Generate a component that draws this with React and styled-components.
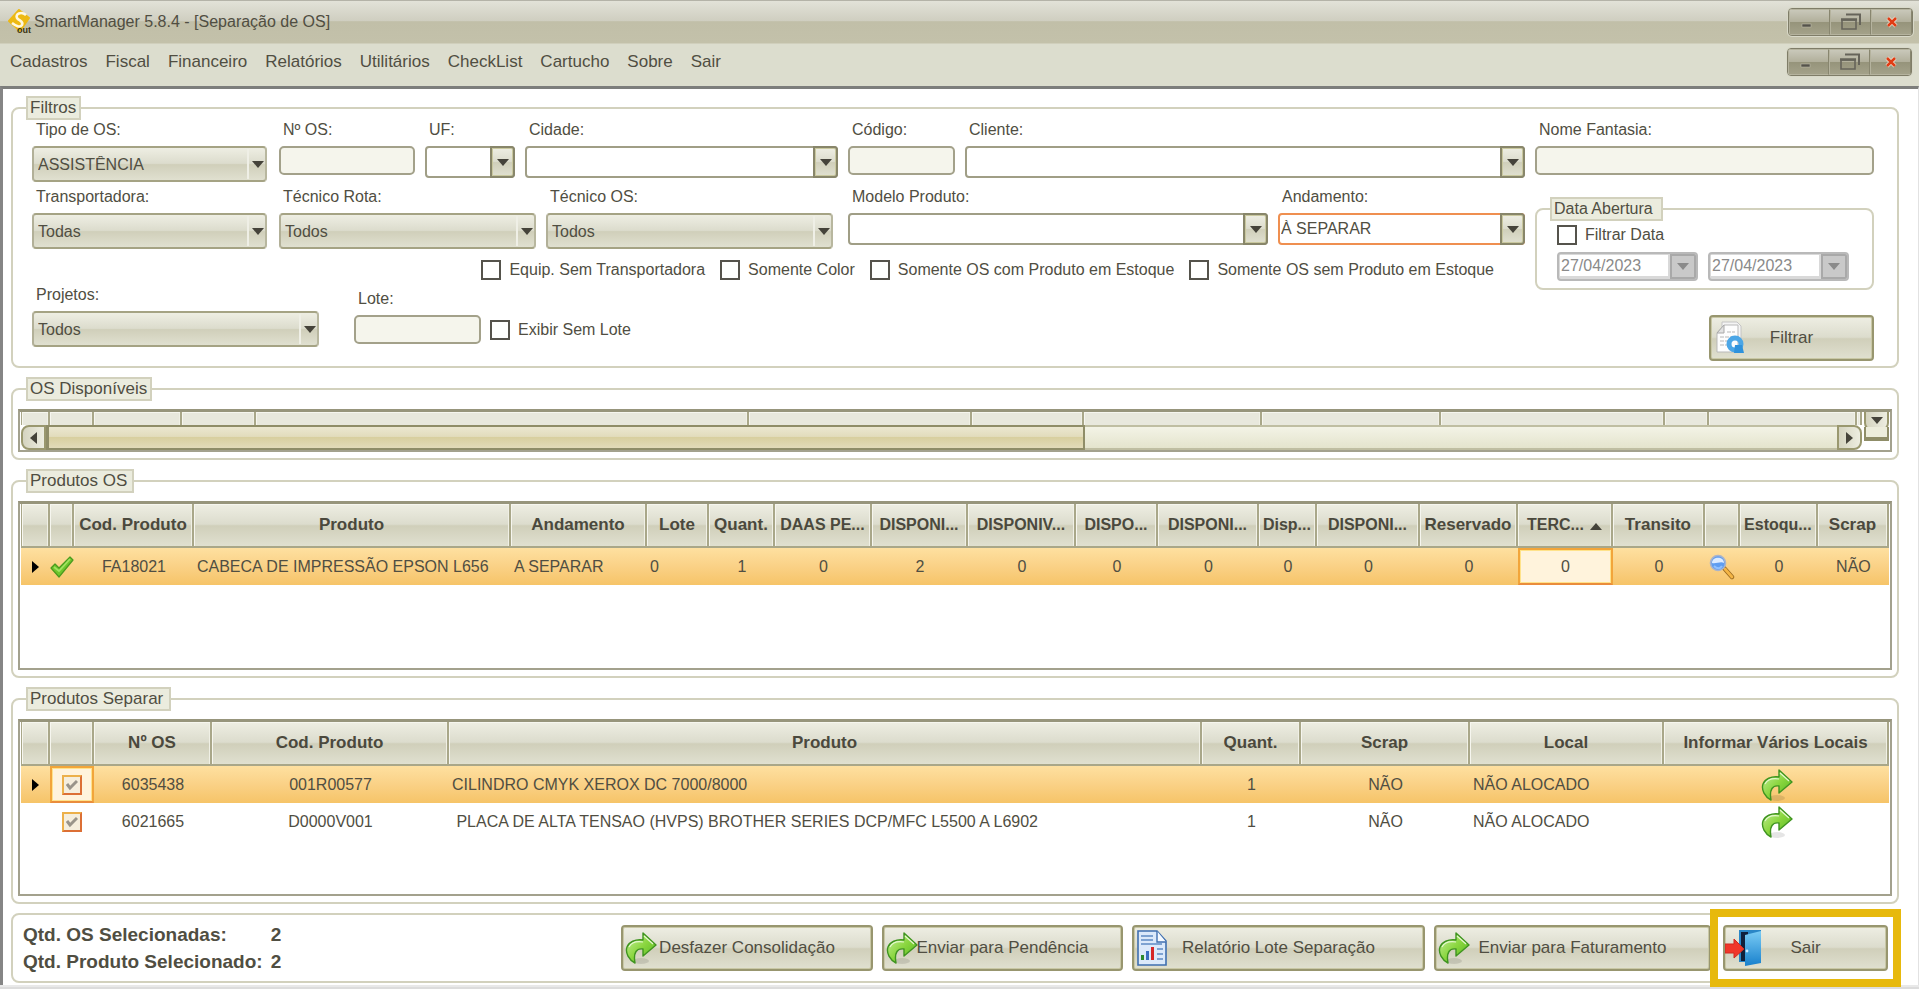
import React, { useState } from 'react';
import styled, { createGlobalStyle, css } from 'styled-components';

const GlobalStyle = createGlobalStyle`
  * { box-sizing: border-box; }
  body {
    margin: 0;
    background: #fff;
    color: #504e42;
    font-family: "Liberation Sans", Arial, sans-serif;
    font-size: 16px;
  }
  button, input, select {
    font-family: inherit;
    font-size: inherit;
    color: inherit;
    margin: 0;
  }
`;

const metal = 'linear-gradient(#eeeee3, #dcdccd 48%, #d0cfba 52%, #e0e0d0)';

const Page = styled.div`
  min-height: 100vh;
  display: flex;
  flex-direction: column;
  overflow: hidden;
`;

/* ---------- barras do topo ---------- */

const TitleBar = styled.header`
  height: 44px;
  padding: 0 6px 0 8px;
  display: flex;
  align-items: center;
  gap: 2px;
  border-top: 1px solid #b4b3a8;
  border-bottom: 1px solid #d0cfbc;
  background: linear-gradient(#e2e2d8, #cfcec0 48%, #c1bfa8 49%, #c3c1aa);
`;

const Title = styled.h1`
  margin: 0;
  flex: 1;
  font-size: 16px;
  font-weight: normal;
`;

const MenuBar = styled.nav`
  height: 42px;
  padding: 0 7px 6px 10px;
  display: flex;
  align-items: center;
  gap: 18px;
  background: #dcddce;
`;

const MenuItem = styled.a`
  font-size: 17px;
  color: inherit;
  text-decoration: none;
`;

const WindowButtons = styled.div`
  margin-left: auto;
  display: flex;
  border: 1px solid #7f7d68;
  border-radius: 4px;
  overflow: hidden;
  box-shadow: 0 0 0 1px #d9d9c9;
`;

const WindowButton = styled.button`
  width: 41px;
  height: 26px;
  padding: 0;
  display: flex;
  align-items: center;
  justify-content: center;
  border: 1px solid #b5b39e;
  border-right-color: #88866f;
  background: linear-gradient(#c9c8ba, #b2b09c 48%, #96947b 52%, #a3a189);
`;

const Content = styled.main`
  flex: 1;
  display: flex;
  flex-direction: column;
  gap: 9px;
  padding: 7px 19px 2px 8px;
  border-top: 3px solid #7d7e7c;
  border-left: 3px solid #858585;
  border-right: 1px solid #e2e2e2;
`;

const StatusLine = styled.footer`
  height: 6px;
  border-top: 2px solid #e9e9e9;
  background: #dcdcdc;
`;

/* ---------- caixas ---------- */

const Group = styled.fieldset`
  margin: 0;
  padding: 0;
  min-width: 0;
  border: 2px solid #d2d1bd;
  border-radius: 8px;
`;

const GroupTitle = styled.legend`
  height: 24px;
  margin-left: 13px;
  padding: 0 ${(p) => p.$end || 3}px 0 2px;
  font-size: ${(p) => (p.$small ? 16 : 17)}px;
  line-height: 20px;
  border: 2px solid #d2d1bd;
  background: #ebecde;
`;

const FilterBody = styled.div`
  display: grid;
  grid-template-columns: 1493fr 339fr;
  column-gap: 10px;
  padding: 0 23px 5px 19px;
`;

const FilterColumn = styled.div`
  display: flex;
  flex-direction: column;
  gap: 5px;
  min-width: 0;
`;

const FilterRow = styled.div`
  display: grid;
  grid-template-columns: ${(p) => p.$cols};
  gap: 10px;
  align-items: start;
`;

const LooseRow = styled.div`
  display: flex;
  align-items: center;
`;

const CheckRow = styled.div`
  margin-top: 6px;
  padding-right: 31px;
  display: flex;
  justify-content: flex-end;
  gap: 15px;
`;

const FieldBox = styled.div`
  display: flex;
  flex-direction: column;
  gap: 6px;
  min-width: 0;
  padding-right: ${(p) => p.$end || 0}px;
  label {
    padding-left: 4px;
    line-height: 20px;
  }
`;

const ProjectField = styled(FieldBox)`
  width: 287px;
`;

const LotField = styled(FieldBox)`
  width: 127px;
  margin: 0 9px 0 35px;
`;

const LotCheck = styled.div`
  padding-top: 28px;
`;

const TextInput = styled.input`
  width: 100%;
  height: 29px;
  border: 2px solid #a3a18a;
  border-radius: 5px;
  background: #f5f5ec;
  padding: 0 4px;
`;

/* o select e a seta ocupam a mesma celula */
const Combo = styled.div`
  display: grid;
  > * { grid-area: 1 / 1; }
  select {
    appearance: none;
    width: 100%;
    height: 36px;
    padding: 0 26px 0 4px;
    border: 2px solid #a5a384;
    border-left-color: #b2b098;
    border-right-color: #b8b79f;
    border-radius: 4px;
    background: ${metal};
  }
  ${(p) => p.$edit && css`
    select {
      height: 32px;
      padding-left: 1px;
      padding-bottom: 2px;
      border-color: ${p.$focus ? '#ef8f50' : '#a09e86'};
      background: #fff;
    }
  `}
`;

const ComboArrow = styled.span`
  justify-self: end;
  pointer-events: none;
  display: flex;
  align-items: center;
  justify-content: center;
  width: 20px;
  margin: 3px 0;
  border-left: 2px solid #efefe6;
  ${(p) => p.$edit && css`
    width: 25px;
    margin: 0;
    border: 2px solid #88866a;
    border-radius: 0 4px 4px 0;
    box-shadow: inset 0 0 0 1px #c9c89f;
    background: ${metal};
  `}
`;

const CheckLabel = styled.label`
  display: flex;
  align-items: center;
  gap: 8px;
  line-height: 20px;
  white-space: nowrap;
  input {
    appearance: none;
    width: 20px;
    height: 20px;
    border: 2px solid #55534c;
    background: #fff;
  }
  input:checked {
    background: linear-gradient(135deg, transparent 30%, #55534c 30%, #55534c 70%, transparent 70%);
  }
`;

const DateGroup = styled(Group)`
  margin-top: 17px;
`;

const DateBody = styled.div`
  padding: 4px 20px 7px;
  display: flex;
  flex-direction: column;
  gap: 7px;
`;

const DateRow = styled.div`
  display: flex;
  gap: 10px;
`;

const DateBox = styled.div`
  flex: 0 1 141px;
  height: 29px;
  display: flex;
  border: 2px solid #b9b9b9;
  border-radius: 4px;
  background: #d9d9d9;
  overflow: hidden;
  input {
    flex: 1;
    min-width: 0;
    margin: 1px 2px 3px 1px;
    padding: 0 1px;
    border: 0;
    background: #fff;
    color: #8a8a8a;
  }
  button {
    width: 26px;
    padding: 0;
    display: flex;
    align-items: center;
    justify-content: center;
    border: 2px solid #a9a9a9;
    background: #c9c9c9;
  }
`;

const ActionButton = styled.button`
  position: relative;
  flex: 0 1 ${(p) => p.$width}px;
  height: 46px;
  padding: 0 2px;
  display: grid;
  align-items: center;
  border: 2px solid #98966f;
  border-radius: 4px;
  box-shadow: inset 0 0 0 1px #c9c8a6;
  background: ${metal};
  font-size: 17px;
  white-space: nowrap;
  > * { grid-area: 1 / 1; }
  span { text-align: center; }
`;

const FilterAction = styled.div`
  display: flex;
  justify-content: flex-end;
  margin-top: 20px;
`;

const ExitButton = styled(ActionButton)`
  margin-left: 3px;
  padding: 0;
  &::after {
    content: '';
    position: absolute;
    inset: -18px -15px;
    border: 8px solid #e7b90c;
  }
`;

/* ---------- grades ---------- */

const GridBox = styled.div`
  margin: 8px 5px 6px;
  min-height: ${(p) => p.$min}px;
  display: flex;
  border: 2px solid #a3a18d;
  border-top: 3px solid #97957c;
  padding: 0 1px;
`;

const GridMain = styled.div`
  flex: 1;
  min-width: 0;
`;

const Table = styled.table`
  width: 100%;
  table-layout: fixed;
  border-collapse: separate;
  border-spacing: 0;
`;

const Col = styled.col`
  width: ${(p) => p.$size}%;
`;

const Th = styled.th`
  height: ${(p) => (p.$short ? 13 : 44)}px;
  padding: 0;
  border-right: 2px solid #a9a789;
  border-bottom: ${(p) => (p.$short ? 0 : 2)}px solid #a9a789;
  box-shadow: inset 1px 1px 0 #f6f6ef, inset -1px 0 0 #f0f0e6;
  background: ${(p) => (p.$short ? '#e8e8dd' : metal)};
  font-size: ${(p) => (p.$cut ? 16 : 17)}px;
  color: #4b493d;
  white-space: nowrap;
  overflow: hidden;
  &:first-child { border-left: 1px solid #a9a789; }
  svg { margin-left: 6px; }
`;

const Td = styled.td`
  height: 37px;
  padding: 0 ${(p) => (p.$icon ? 0 : 3)}px;
  text-align: ${(p) => (p.$left ? 'left' : 'center')};
  white-space: pre;
  overflow: hidden;
  svg { display: block; margin: 0 auto; }
  ${(p) => p.$focus && css`
    padding: 0;
    border: 2px solid #f2a53a;
    border-bottom-color: #ea8c3c;
    box-shadow: inset 0 0 0 1px #ffe28a;
    background: #fff3dc;
  `}
`;

const Tr = styled.tr`
  ${(p) => p.$active && css`
    background: linear-gradient(#fee0a0, #fad186 50%, #f6c468);
  `}
`;

const RowCheck = styled.input`
  appearance: none;
  width: 20px;
  height: 20px;
  display: block;
  border: 2px solid #ecb04a;
  border-right-color: #dc6f35;
  border-bottom-color: #dc6f35;
  background: #f5eedd;
`;

const CheckCell = styled.label`
  display: grid;
  place-items: center;
  > * { grid-area: 1 / 1; }
  svg { pointer-events: none; }
`;

const IconButton = styled.button`
  display: block;
  margin: 0 auto;
  padding: 0;
  border: 0;
  background: none;
`;

/* ---------- barra de rolagem ---------- */

const ScrollBar = styled.div`
  display: flex;
  height: 25px;
`;

const ScrollButton = styled.button`
  width: 25px;
  padding: 0;
  display: flex;
  align-items: center;
  justify-content: center;
  border: 2px solid #9a986f;
  border-radius: ${(p) => p.$round};
  background: linear-gradient(90deg, #d5d4c0, #edede0);
`;

const ScrollTrack = styled.div`
  flex: 1;
  border-top: 2px solid #bfbea2;
  border-bottom: 2px solid #bfbea2;
  background: linear-gradient(#f3f3e6, #e4e4cd);
`;

const ScrollThumb = styled.div`
  width: 58%;
  height: 25px;
  margin-top: -2px;
  border: 2px solid #8f8d68;
  border-left-width: 3px;
  background: linear-gradient(#ebe7d0, #e2dcbc 45%, #d8cf9f 50%, #e2dbb9);
`;

const ScrollSide = styled.div`
  width: 27px;
  display: flex;
  flex-direction: column;
  padding: 0 0 9px 2px;
  ${ScrollButton} {
    height: 19px;
    border-top: 0;
  }
`;

const ScrollEnd = styled.div`
  flex: 1;
  margin-top: -4px;
  border: 2px solid #8f8d68;
  border-top: 0;
  border-bottom-width: 4px;
  background: #ededdc;
`;

/* ---------- rodape ---------- */

const Summary = styled.section`
  display: flex;
  align-items: center;
  gap: 9px;
  padding: 6px 9px 6px 10px;
  border: 2px solid #d2d1bd;
  border-radius: 8px;
`;

const Totals = styled.dl`
  margin: 0 auto 0 0;
  display: grid;
  grid-template-columns: auto auto;
  column-gap: 8px;
  font-size: 19px;
  line-height: 27px;
  font-weight: bold;
  dt, dd { margin: 0; }
`;

/* ---------- icones ---------- */

const Arrow = ({ dir = 'down', color = '#45433a' }) => {
  const points = {
    down: '0,0 12,0 6,7',
    up: '0,7 12,7 6,0',
    left: '8,0 8,12 1,6',
    right: '1,0 1,12 8,6',
  };
  const side = dir === 'left' || dir === 'right';
  return (
    <svg width={side ? 9 : 12} height={side ? 12 : 7} aria-hidden="true">
      <polygon points={points[dir]} fill={color} />
    </svg>
  );
};

const LogoIcon = () => (
  <svg width="24" height="26" viewBox="0 0 24 26" aria-hidden="true">
    <path d="M11 1 L21 9 L12 22 L1 12 Z" fill="#edb913" stroke="#edb913" strokeWidth="2" strokeLinejoin="round" />
    <path d="M18 6 C13 2 7 5 9 9 C11 12 16 12 14 16 C12 19 8 17 4 14" fill="none" stroke="#fff8e0" strokeWidth="2.6" />
    <text x="9" y="24" fontSize="9" fontWeight="bold" fill="#3b3412">out</text>
  </svg>
);

const GreenArrow = ({ size = 32 }) => (
  <svg width={size} height={size} viewBox="0 0 32 32" aria-hidden="true">
    <defs>
      <linearGradient id="green" x1="0" y1="0" x2="1" y2="1">
        <stop offset="0" stopColor="#c9f0a0" />
        <stop offset="0.5" stopColor="#8ad63f" />
        <stop offset="1" stopColor="#4fb31c" />
      </linearGradient>
    </defs>
    <ellipse cx="16" cy="29" rx="8" ry="3" fill="#000" opacity="0.1" />
    <path d="M18 1 L31 13 L18 24 V17 C12 16 8 20 10 31 C4 28 0 21 2 15 C4 10 10 7 18 8 Z" fill="url(#green)" stroke="#3f9420" strokeWidth="1.4" strokeLinejoin="round" />
    <path d="M19 4 L28 12 M4 15 C6 11 11 9 18 10" fill="none" stroke="#e4f8cf" strokeWidth="1.2" />
  </svg>
);

const CheckIcon = () => (
  <svg width="24" height="22" viewBox="0 0 24 22" aria-hidden="true">
    <path d="M1 12 L5 8 L9 12 L20 1 L23 4 L9 21 Z" fill="#6ec62c" stroke="#4a9a1e" strokeWidth="1.2" strokeLinejoin="round" />
    <path d="M4 11 L9 15 L20 3" fill="none" stroke="#a2e262" strokeWidth="1.8" />
  </svg>
);

const GreyCheck = () => (
  <svg width="12" height="12" viewBox="0 0 12 12" aria-hidden="true">
    <path d="M1 5 L4 9 L11 2" fill="none" stroke="#99948a" strokeWidth="3" />
  </svg>
);

const SearchIcon = () => (
  <svg width="26" height="26" viewBox="0 0 26 26" aria-hidden="true">
    <path d="M15 14 L23 23" stroke="#9a6a20" strokeWidth="4.4" strokeLinecap="round" />
    <path d="M16 15 L23 23" stroke="#f4b545" strokeWidth="2.8" strokeLinecap="round" />
    <circle cx="9" cy="9" r="7.5" fill="#5f9df0" stroke="#a9b4cc" strokeWidth="1.6" />
    <path d="M3 9 C3 2 15 2 15 9 C12 7 7 10 3 9 Z" fill="#dcebff" />
    <path d="M5 12 C8 15 11 15 13 12" fill="none" stroke="#8fc0ff" strokeWidth="2" />
  </svg>
);

const RefreshDocIcon = () => (
  <svg width="32" height="34" viewBox="-2 0 32 34" aria-hidden="true">
    <path d="M7 1 H22 L26 5 V29 H7 Z" fill="#f4f4f4" stroke="#c4c4c4" />
    <path d="M9 4 H23 V31 H2 V12 Z" fill="#fdfdfd" stroke="#b9b9b9" />
    <path d="M9 4 V12 H2 Z" fill="#e2e2e2" stroke="#a9a9a9" />
    <path d="M12 11 H20 M5 16 H19 M5 20 H14 M5 24 H12" stroke="#dadada" strokeWidth="2" strokeDasharray="4 1" />
    <circle cx="20" cy="23" r="6" fill="none" stroke="#4ba6e6" strokeWidth="5" />
    <path d="M20 24 L27 24 L29 32 L19 32 Z" fill="#2f92dc" />
  </svg>
);

const ReportIcon = () => (
  <svg width="32" height="36" viewBox="-1 0 32 36" aria-hidden="true">
    <path d="M1 1 H20 L29 11 V35 H1 Z" fill="#dbe9fa" stroke="#3f6fb0" strokeWidth="1.6" />
    <path d="M20 1 V12 H29" fill="#f4f9ff" stroke="#3f6fb0" strokeWidth="1.4" />
    <path d="M4 6 H16 M4 10 H16 M4 14 H25 M20 19 H26 M20 24 H26 M20 29 H26" stroke="#5f8ac4" strokeWidth="1.6" />
    <rect x="4" y="25" width="3" height="5" fill="#2c8a2c" />
    <rect x="9" y="21" width="3" height="9" fill="#3a6fc0" />
    <rect x="14" y="17" width="3" height="13" fill="#d62828" />
  </svg>
);

const DoorIcon = () => (
  <svg width="38" height="38" viewBox="0 0 38 38" aria-hidden="true">
    <defs>
      <linearGradient id="door" x1="0" y1="0" x2="0" y2="1">
        <stop offset="0" stopColor="#7accf5" />
        <stop offset="1" stopColor="#1880cc" />
      </linearGradient>
    </defs>
    <path d="M14 1 H36 V33 H14 Z" fill="#2a86c6" />
    <path d="M16 3 H23 V32 H16 Z" fill="#10203c" />
    <path d="M20 6 L36 2 V34 L20 37 Z" fill="url(#door)" />
    <circle cx="22" cy="22" r="1.4" fill="#cfeaff" />
    <path d="M0 15 H9 V10 L19 20 L9 29 V24 H0 Z" fill="#f0372a" stroke="#d02a20" />
  </svg>
);

const MinimizeIcon = () => (
  <svg width="22" height="18" aria-hidden="true"><rect x="3" y="11" width="9" height="3" fill="#55534a" stroke="#c5c4b4" strokeWidth="0.5" /></svg>
);

const RestoreIcon = () => (
  <svg width="22" height="18" viewBox="0 0 22 18" fill="none" stroke="#66645a" aria-hidden="true">
    <path d="M6 1.5 H20 V12" strokeWidth="2" />
    <path d="M2 7 H16 V16 H2 Z" strokeWidth="1.6" />
    <path d="M1 6.5 H17" strokeWidth="2.4" />
  </svg>
);

const CloseIcon = () => (
  <svg width="12" height="12" viewBox="0 0 12 12" aria-hidden="true">
    <path d="M2 2 L10 10 M10 2 L2 10" stroke="#ece6d6" strokeWidth="4" />
    <path d="M2 2 L10 10 M10 2 L2 10" stroke="#e03c14" strokeWidth="2.6" />
  </svg>
);

/* ---------- dados ---------- */

const menu = ['Cadastros', 'Fiscal', 'Financeiro', 'Relatórios', 'Utilitários', 'CheckList', 'Cartucho', 'Sobre', 'Sair'];

const disponiveisCols = [29, 44, 88, 74, 493, 223, 112, 178, 179, 224, 44, 148, 5];

const produtosCols = [
  { w: 29 },
  { w: 24 },
  { w: 120, title: 'Cod. Produto' },
  { w: 317, title: 'Produto' },
  { w: 136, title: 'Andamento' },
  { w: 62, title: 'Lote' },
  { w: 66, title: 'Quant.' },
  { w: 97, title: 'DAAS PE...', cut: true },
  { w: 96, title: 'DISPONI...', cut: true },
  { w: 108, title: 'DISPONIV...', cut: true },
  { w: 82, title: 'DISPO...', cut: true },
  { w: 101, title: 'DISPONI...', cut: true },
  { w: 58, title: 'Disp...', cut: true },
  { w: 103, title: 'DISPONI...', cut: true },
  { w: 98, title: 'Reservado' },
  { w: 95, title: 'TERC...', cut: true, sorted: true },
  { w: 92, title: 'Transito' },
  { w: 35 },
  { w: 78, title: 'Estoqu...', cut: true },
  { w: 71, title: 'Scrap' },
];

const separarCols = [
  { w: 29 },
  { w: 44 },
  { w: 118, title: 'Nº OS' },
  { w: 237, title: 'Cod. Produto' },
  { w: 753, title: 'Produto' },
  { w: 99, title: 'Quant.' },
  { w: 169, title: 'Scrap' },
  { w: 194, title: 'Local' },
  { w: 225, title: 'Informar Vários Locais' },
];

const separarRows = [
  { os: '6035438', cod: '001R00577', produto: 'CILINDRO CMYK XEROX DC 7000/8000' },
  { os: '6021665', cod: 'D0000V001', produto: ' PLACA DE ALTA TENSAO (HVPS) BROTHER SERIES DCP/MFC L5500 A L6902' },
];

/* ---------- partes ---------- */

function WindowControls() {
  return (
    <WindowButtons>
      <WindowButton aria-label="Minimizar"><MinimizeIcon /></WindowButton>
      <WindowButton aria-label="Restaurar"><RestoreIcon /></WindowButton>
      <WindowButton aria-label="Fechar"><CloseIcon /></WindowButton>
    </WindowButtons>
  );
}

function SelectField({ id, label, value = '', edit, focus, end, as }) {
  return (
    <FieldBox as={as} $end={end}>
      <label htmlFor={id}>{label}</label>
      <Combo $edit={edit} $focus={focus}>
        <select id={id} defaultValue={value}>
          <option value={value}>{value}</option>
        </select>
        <ComboArrow $edit={edit}><Arrow /></ComboArrow>
      </Combo>
    </FieldBox>
  );
}

function InputField({ id, label, as }) {
  return (
    <FieldBox as={as}>
      <label htmlFor={id}>{label}</label>
      <TextInput id={id} type="text" />
    </FieldBox>
  );
}

function Check({ children }) {
  return (
    <CheckLabel>
      <input type="checkbox" />
      {children}
    </CheckLabel>
  );
}

function DateField({ label }) {
  return (
    <DateBox>
      <input type="text" defaultValue="27/04/2023" aria-label={label} disabled />
      <button disabled aria-label={'Abrir ' + label}><Arrow color="#8a8a8a" /></button>
    </DateBox>
  );
}

function TableHead({ cols }) {
  const total = cols.reduce((sum, c) => sum + c.w, 0);
  return (
    <>
      <colgroup>
        {cols.map((c, i) => <Col key={i} $size={(c.w / total) * 100} />)}
      </colgroup>
      <thead>
        <tr>
          {cols.map((c, i) => (
            <Th key={i} $cut={c.cut} $short={c.short}>
              {c.title}
              {c.sorted && <Arrow dir="up" />}
            </Th>
          ))}
        </tr>
      </thead>
    </>
  );
}

function Filtros() {
  return (
    <Group>
      <GroupTitle>Filtros</GroupTitle>
      <FilterBody>
        <FilterColumn>
          <FilterRow $cols="237fr 136fr 90fr 313fr 107fr 560fr">
            <SelectField id="tipo" label="Tipo de OS:" value="ASSISTÊNCIA" end={2} />
            <InputField id="numero" label="Nº OS:" />
            <SelectField id="uf" label="UF:" edit />
            <SelectField id="cidade" label="Cidade:" edit />
            <InputField id="codigo" label="Código:" />
            <SelectField id="cliente" label="Cliente:" edit />
          </FilterRow>
          <FilterRow $cols="237fr 257fr 292fr 420fr 247fr">
            <SelectField id="transportadora" label="Transportadora:" value="Todas" end={2} />
            <SelectField id="rota" label="Técnico Rota:" value="Todos" />
            <SelectField id="tecnico" label="Técnico OS:" value="Todos" end={5} />
            <SelectField id="modelo" label="Modelo Produto:" edit />
            <SelectField id="andamento" label="Andamento:" value="À SEPARAR" edit focus />
          </FilterRow>
          <CheckRow>
            <Check>Equip. Sem Transportadora</Check>
            <Check>Somente Color</Check>
            <Check>Somente OS com Produto em Estoque</Check>
            <Check>Somente OS sem Produto em Estoque</Check>
          </CheckRow>
          <LooseRow>
            <SelectField as={ProjectField} id="projetos" label="Projetos:" value="Todos" />
            <InputField as={LotField} id="lote" label="Lote:" />
            <LotCheck><Check>Exibir Sem Lote</Check></LotCheck>
          </LooseRow>
        </FilterColumn>
        <FilterColumn>
          <InputField id="fantasia" label="Nome Fantasia:" />
          <DateGroup>
            <GroupTitle $small $end={8}>Data Abertura</GroupTitle>
            <DateBody>
              <Check>Filtrar Data</Check>
              <DateRow>
                <DateField label="Data inicial" />
                <DateField label="Data final" />
              </DateRow>
            </DateBody>
          </DateGroup>
          <FilterAction>
            <ActionButton $width={165}>
              <RefreshDocIcon />
              <span>Filtrar</span>
            </ActionButton>
          </FilterAction>
        </FilterColumn>
      </FilterBody>
    </Group>
  );
}

function OsDisponiveis() {
  return (
    <Group>
      <GroupTitle>OS Disponíveis</GroupTitle>
      <GridBox $min={42}>
        <GridMain>
          <Table>
            <TableHead cols={disponiveisCols.map((w) => ({ w, short: true }))} />
          </Table>
          <ScrollBar>
            <ScrollButton $round="8px 0 0 8px" aria-label="Rolar para a esquerda"><Arrow dir="left" /></ScrollButton>
            <ScrollTrack><ScrollThumb /></ScrollTrack>
            <ScrollButton $round="0 8px 8px 0" aria-label="Rolar para a direita"><Arrow dir="right" /></ScrollButton>
          </ScrollBar>
        </GridMain>
        <ScrollSide>
          <ScrollButton $round="0 0 8px 8px" aria-label="Rolar para baixo"><Arrow /></ScrollButton>
          <ScrollEnd />
        </ScrollSide>
      </GridBox>
    </Group>
  );
}

function ProdutosOs() {
  return (
    <Group>
      <GroupTitle $end={5}>Produtos OS</GroupTitle>
      <GridBox $min={169}>
        <GridMain>
          <Table>
            <TableHead cols={produtosCols} />
            <tbody>
              <Tr $active>
                <Td $icon><Arrow dir="right" color="#000" /></Td>
                <Td $icon><CheckIcon /></Td>
                <Td>FA18021</Td>
                <Td $left>CABECA DE IMPRESSÃO EPSON L656</Td>
                <Td $left>A SEPARAR</Td>
                <Td $left>0</Td>
                <Td>1</Td>
                <Td>0</Td>
                <Td>2</Td>
                <Td>0</Td>
                <Td>0</Td>
                <Td>0</Td>
                <Td>0</Td>
                <Td>0</Td>
                <Td>0</Td>
                <Td $focus>0</Td>
                <Td>0</Td>
                <Td $icon><IconButton aria-label="Pesquisar"><SearchIcon /></IconButton></Td>
                <Td>0</Td>
                <Td>NÃO</Td>
              </Tr>
            </tbody>
          </Table>
        </GridMain>
      </GridBox>
    </Group>
  );
}

function ProdutosSeparar() {
  const [marked, setMarked] = useState([true, true]);

  const toggle = (index) => {
    setMarked(marked.map((m, i) => (i === index ? !m : m)));
  };

  return (
    <Group>
      <GroupTitle $end={6}>Produtos Separar</GroupTitle>
      <GridBox $min={177}>
        <GridMain>
          <Table>
            <TableHead cols={separarCols} />
            <tbody>
              {separarRows.map((row, i) => (
                <Tr key={row.os} $active={i === 0}>
                  <Td $icon>{i === 0 && <Arrow dir="right" color="#000" />}</Td>
                  <Td $icon $focus={i === 0}>
                    <CheckCell>
                      <RowCheck type="checkbox" checked={marked[i]} onChange={() => toggle(i)} aria-label={'Selecionar ' + row.os} />
                      {marked[i] && <GreyCheck />}
                    </CheckCell>
                  </Td>
                  <Td>{row.os}</Td>
                  <Td>{row.cod}</Td>
                  <Td $left>{row.produto}</Td>
                  <Td>1</Td>
                  <Td>NÃO</Td>
                  <Td $left>NÃO ALOCADO</Td>
                  <Td $icon><IconButton aria-label="Informar vários locais"><GreenArrow /></IconButton></Td>
                </Tr>
              ))}
            </tbody>
          </Table>
        </GridMain>
      </GridBox>
    </Group>
  );
}

export default function App() {
  return (
    <Page>
      <GlobalStyle />
      <TitleBar>
        <LogoIcon />
        <Title>SmartManager 5.8.4 - [Separação de OS]</Title>
        <WindowControls />
      </TitleBar>
      <MenuBar>
        {menu.map((item) => <MenuItem key={item} href="#">{item}</MenuItem>)}
        <WindowControls />
      </MenuBar>
      <Content>
        <Filtros />
        <OsDisponiveis />
        <ProdutosOs />
        <ProdutosSeparar />
        <Summary>
          <Totals>
            <dt>Qtd. OS Selecionadas:</dt>
            <dd>2</dd>
            <dt>Qtd. Produto Selecionado:</dt>
            <dd>2</dd>
          </Totals>
          <ActionButton $width={252}><GreenArrow /><span>Desfazer Consolidação</span></ActionButton>
          <ActionButton $width={241}><GreenArrow /><span>Enviar para Pendência</span></ActionButton>
          <ActionButton $width={293}><ReportIcon /><span>Relatório Lote Separação</span></ActionButton>
          <ActionButton $width={277}><GreenArrow /><span>Enviar para Faturamento</span></ActionButton>
          <ExitButton $width={165}><DoorIcon /><span>Sair</span></ExitButton>
        </Summary>
      </Content>
      <StatusLine />
    </Page>
  );
}
